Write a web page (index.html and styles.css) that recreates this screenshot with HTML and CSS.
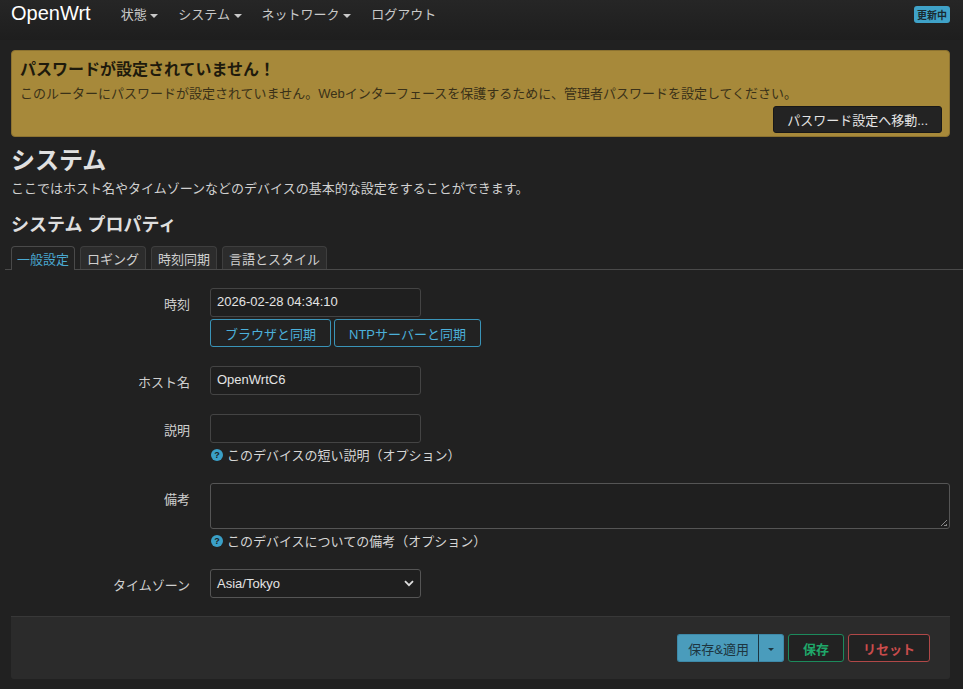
FILE: index.html
```html
<!DOCTYPE html>
<html lang="ja">
<head>
  <meta charset="UTF-8" />
  <title>システム - OpenWrt</title>
  <link rel="stylesheet" href="styles.css">
</head>
<body>
  <header class="topbar">
    <a class="brand" href="#">OpenWrt</a>
    <nav class="menu">
      <a href="#">状態 <span class="caret"></span></a>
      <a href="#">システム <span class="caret"></span></a>
      <a href="#">ネットワーク <span class="caret"></span></a>
      <a href="#">ログアウト</a>
    </nav>
    <span class="badge">更新中</span>
  </header>

  <main class="main">
    <div class="alert">
      <h4>パスワードが設定されていません！</h4>
      <p>このルーターにパスワードが設定されていません。Webインターフェースを保護するために、管理者パスワードを設定してください。</p>
      <div class="alert-actions">
        <button class="btn-dark">パスワード設定へ移動...</button>
      </div>
    </div>

    <h2>システム</h2>
    <p class="page-desc">ここではホスト名やタイムゾーンなどのデバイスの基本的な設定をすることができます。</p>

    <h3>システム プロパティ</h3>
    <ul class="tabs">
      <li class="active">一般設定</li>
      <li>ロギング</li>
      <li>時刻同期</li>
      <li>言語とスタイル</li>
    </ul>

    <div class="form">
      <div class="row">
        <label>時刻</label>
        <div class="field">
          <div class="input">2026-02-28 04:34:10</div>
          <div class="btn-group">
            <button class="btn-outline">ブラウザと同期</button>
            <button class="btn-outline">NTPサーバーと同期</button>
          </div>
        </div>
      </div>
      <div class="row">
        <label>ホスト名</label>
        <div class="field">
          <div class="input">OpenWrtC6</div>
        </div>
      </div>
      <div class="row">
        <label>説明</label>
        <div class="field">
          <div class="input"></div>
          <div class="help"><span class="q">?</span>このデバイスの短い説明（オプション）</div>
        </div>
      </div>
      <div class="row">
        <label>備考</label>
        <div class="field wide">
          <div class="textarea"><span class="grip"></span></div>
          <div class="help"><span class="q">?</span>このデバイスについての備考（オプション）</div>
        </div>
      </div>
      <div class="row">
        <label>タイムゾーン</label>
        <div class="field">
          <div class="input select">Asia/Tokyo
            <svg width="10" height="7" viewBox="0 0 10 7"><path d="M1 1.2l4 4 4-4" fill="none" stroke="#ddd" stroke-width="1.8"/></svg>
          </div>
        </div>
      </div>
    </div>

    <div class="actions">
      <div class="split">
        <button class="btn-apply">保存&amp;適用</button>
        <button class="btn-apply-drop"><span class="caret small"></span></button>
      </div>
      <button class="btn-save">保存</button>
      <button class="btn-reset">リセット</button>
    </div>
  </main>
</body>
</html>
```

FILE: styles.css
```css
body {
  margin: 0;
  background: #212121;
  color: #d6d6d6;
  font-family: "Liberation Sans", "Noto Sans CJK JP", sans-serif;
  font-size: 13px;
}
button {
  font-family: inherit;
  font-size: 13px;
  cursor: pointer;
}

.topbar {
  display: flex;
  align-items: center;
  height: 27px;
  padding: 0 11px 13px 11px;
  background: linear-gradient(#262626, #1e1e1e);
}
.brand {
  color: #fff;
  font-size: 20px;
  text-decoration: none;
  margin-right: 30px;
}
.menu {
  display: flex;
  gap: 20px;
}
.menu a {
  color: #c9c9c9;
  text-decoration: none;
  font-size: 13px;
}
.caret {
  display: inline-block;
  width: 0;
  height: 0;
  border-left: 4px solid transparent;
  border-right: 4px solid transparent;
  border-top: 4px solid #c9c9c9;
  vertical-align: middle;
  margin-left: 0;
}
.caret.small {
  border-left-width: 3px;
  border-right-width: 3px;
  border-top-width: 3px;
  border-top-color: #1c3440;
}
.badge {
  margin-left: auto;
  margin-right: 2px;
  background: #3fa2c8;
  color: #1a2a30;
  font-size: 10px;
  font-weight: bold;
  padding: 1px 3px;
  border-radius: 3px;
  margin-top: 2px;
}

.main {
  padding: 10px 13px 10px 11px;
}

.alert {
  background: #a7893a;
  border: 1px solid #8c7230;
  border-radius: 4px;
  padding: 5px 7px 3px 8px;
  color: #2a2410;
}
.alert h4 {
  margin: 0 0 3px 0;
  font-size: 16px;
  color: #1e1a0c;
}
.alert p {
  margin: 0;
  font-size: 13px;
  color: #3a3118;
}
.alert-actions {
  display: flex;
  justify-content: flex-end;
  margin-top: 4px;
}
.btn-dark {
  background: #232323;
  color: #e4e4e4;
  border: 1px solid #181818;
  border-radius: 3px;
  height: 27px;
  padding: 0 13px;
}

h2 {
  margin: 4px 0 0 0;
  font-size: 24px;
  color: #e0e0e0;
}
.page-desc {
  margin: 2px 0 0 0;
  font-size: 13px;
  color: #d0d0d0;
}
h3 {
  margin: 13px 0 0 0;
  font-size: 18px;
  color: #dedede;
}

.tabs {
  list-style: none;
  display: flex;
  gap: 5px;
  margin: 10px -13px 0 -6px;
  padding: 0 0 0 6px;
  border-bottom: 1px solid #4a4a4a;
}
.tabs li {
  background: #2c2c2c;
  border: 1px solid #3e3e3e;
  border-bottom: none;
  border-radius: 4px 4px 0 0;
  padding: 2px 6px 1px 6px;
  font-size: 13px;
  color: #d0d0d0;
}
.tabs li.active {
  background: #222;
  color: #4aa9d2;
  border-color: #4a4a4a;
  margin-bottom: -1px;
  padding: 2px 5px 2px 5px;
}

.form {
  padding-top: 18px;
  display: flex;
  flex-direction: column;
  gap: 19px;
}
.row {
  display: flex;
  align-items: flex-start;
}
.row label {
  width: 179px;
  text-align: right;
  padding-top: 6px;
  padding-right: 20px;
  color: #cfcfcf;
}
.field {
  display: flex;
  flex-direction: column;
  gap: 2px;
}
.field.wide {
  flex: 1;
}
.input {
  box-sizing: border-box;
  width: 211px;
  height: 29px;
  border: 1px solid #444;
  border-radius: 3px;
  background: #1f1f1f;
  padding: 5px 6px;
  color: #e4e4e4;
  font-size: 13px;
}
.select {
  display: flex;
  align-items: center;
  justify-content: space-between;
  border-color: #555;
  padding-top: 4px;
}
.textarea {
  position: relative;
  box-sizing: border-box;
  height: 46px;
  border: 1px solid #555;
  border-radius: 3px;
  background: #1f1f1f;
}
.grip {
  position: absolute;
  right: 2px;
  bottom: 2px;
  width: 6px;
  height: 6px;
  background: linear-gradient(135deg, transparent 45%, #888 45%, #888 55%, transparent 55%, transparent 75%, #888 75%);
}
.help {
  display: flex;
  align-items: center;
  gap: 4px;
  margin-top: 0;
  padding-left: 1px;
  font-size: 13px;
  color: #d6d6d6;
}
.q {
  display: inline-flex;
  align-items: center;
  justify-content: center;
  width: 12px;
  height: 12px;
  border-radius: 50%;
  background: #3aa0c8;
  color: #1b1b1b;
  font-size: 9px;
  font-weight: bold;
}
.btn-group {
  display: flex;
  gap: 3px;
}
.btn-outline {
  height: 28px;
  padding: 0 14px;
  background: #222;
  border: 1px solid #3a94b8;
  border-radius: 3px;
  color: #4cb0da;
}

.actions {
  margin-top: 18px;
  background: #2b2b2b;
  border-top: 1px solid #383838;
  border-radius: 0 0 3px 3px;
  display: flex;
  justify-content: flex-end;
  align-items: center;
  gap: 4px;
  padding: 17px 20px 17px 0;
}
.split {
  display: flex;
}
.btn-apply, .btn-apply-drop {
  height: 28px;
  background: #4a9cbc;
  border: 1px solid #3d89a8;
  color: #1d3540;
}
.btn-apply {
  border-radius: 3px 0 0 3px;
  padding: 0 9px 0 10px;
  border-right: 1px solid #1c3440;
}
.btn-apply-drop {
  border-radius: 0 3px 3px 0;
  border-left: none;
  width: 25px;
  padding: 0;
}
.btn-save {
  height: 28px;
  padding: 0 14px;
  background: #222;
  border: 1px solid #1c8a5c;
  border-radius: 3px;
  color: #1fa86a;
  font-weight: bold;
}
.btn-reset {
  height: 28px;
  padding: 0 14px;
  background: #222;
  border: 1px solid #b04848;
  border-radius: 3px;
  color: #c94c4c;
  font-weight: bold;
}
```
